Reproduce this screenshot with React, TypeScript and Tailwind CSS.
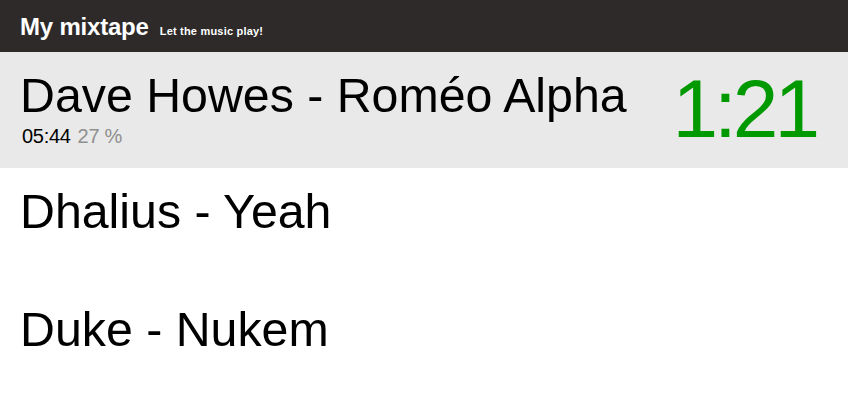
import React from "react";

const tracks = [
  { title: "Dave Howes - Roméo Alpha", current: true },
  { title: "Dhalius - Yeah" },
  { title: "Duke - Nukem" },
];

export default function App() {
  return (
    <div className="w-[848px] h-[401px] bg-white overflow-hidden" style={{ fontFamily: '"Liberation Sans", Arial, sans-serif' }}>
      <header className="h-[52px] bg-[#2d2a29] flex items-baseline px-5 pt-[15px]">
        <h1 className="text-[24px] leading-[24px] font-bold text-white tracking-[-0.2px]">My mixtape</h1>
        <span className="ml-[11px] text-[11px] font-bold text-white tracking-[0.2px]">Let the music play!</span>
      </header>
      <ul>
        {tracks.map((t, i) =>
          t.current ? (
            <li key={i} className="h-[116px] bg-[#e9e9e9] flex items-start justify-between px-5">
              <div className="pt-[17px]">
                <div className="text-[48.3px] leading-[52px] text-black">{t.title}</div>
                <div className="text-[20px] leading-[22px] mt-[4px] ml-[2px] tracking-[-0.3px]">
                  <span className="text-black">05:44</span>
                  <span className="text-[#8f8f8f] ml-[7px]">27 %</span>
                </div>
              </div>
              <div className="text-[82px] leading-[82px] text-[#009900] pt-[16px] tracking-[-4px] pr-[12px]">1:21</div>
            </li>
          ) : (
            <li key={i} className="h-[118px] flex items-start px-5 pt-[17px]">
              <div className="text-[48.3px] leading-[52px] text-black">{t.title}</div>
            </li>
          )
        )}
      </ul>
    </div>
  );
}
